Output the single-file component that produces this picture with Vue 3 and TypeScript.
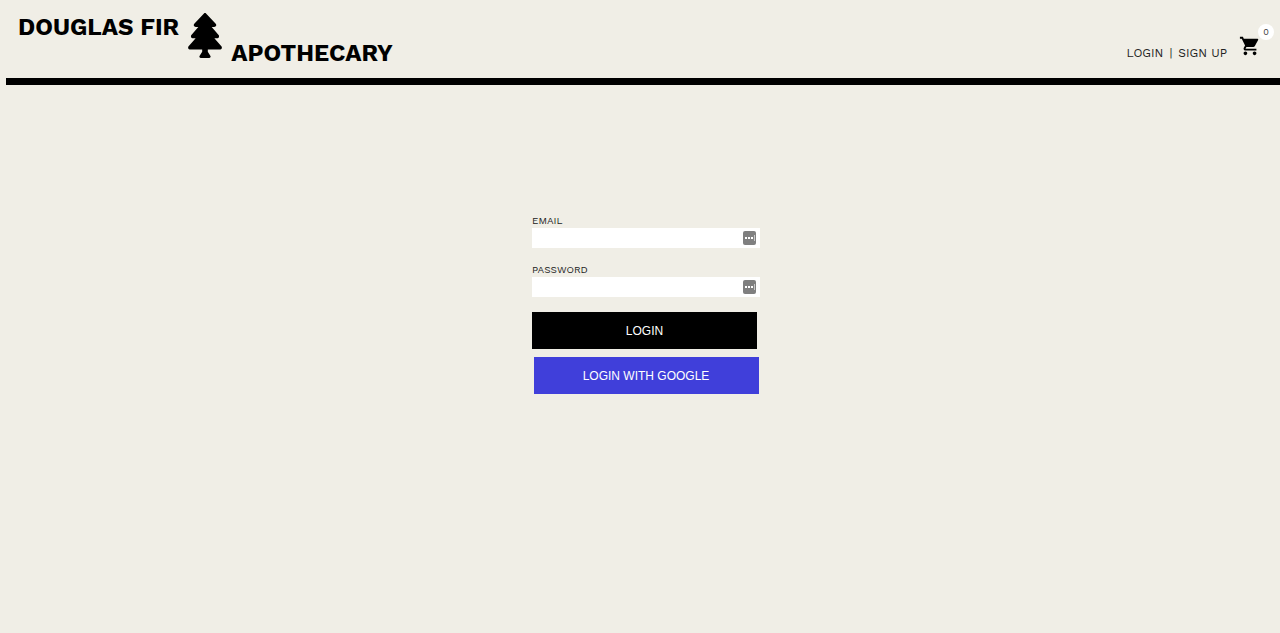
<script setup lang="ts">
import { ref } from 'vue'

const email = ref('')
const password = ref('')
const cartCount = ref(0)
</script>

<template>
  <div class="page">
    <header class="header">
      <a class="brand" href="#">
        <span class="brand-top">DOUGLAS FIR</span>
        <svg class="tree" viewBox="0 0 384 512" aria-hidden="true">
          <path d="M378.31 378.49L298.42 288h30.63c9.01 0 16.98-5 20.78-13.06 3.8-8.04 2.55-17.26-3.28-24.05L268.42 160h28.89c9.1 0 17.3-5.35 20.86-13.61 3.52-8.13 1.86-17.59-4.24-24.08L203.66 4.83c-6.03-6.45-17.28-6.45-23.32 0L70.06 122.31c-6.1 6.49-7.75 15.95-4.24 24.08C69.38 154.65 77.59 160 86.69 160h28.89l-78.14 90.91c-5.81 6.78-7.06 15.99-3.27 24.04C37.97 283 45.93 288 54.95 288h30.63L5.69 378.49c-6 6.79-7.36 16.09-3.56 24.26 3.75 8.05 12 13.25 21.01 13.25H160v24.45l-30.29 48.4c-5.32 10.64 2.42 23.16 14.31 23.16h95.96c11.89 0 19.63-12.52 14.31-23.16L224 440.45V416h136.86c9.01 0 17.26-5.2 21.01-13.25 3.8-8.17 2.44-17.47-3.56-24.26z" />
        </svg>
        <span class="brand-bottom">APOTHECARY</span>
      </a>
      <div class="tools">
        <nav class="nav">
          <a href="#">LOGIN</a>
          <span>|</span>
          <a href="#">SIGN UP</a>
        </nav>
        <a class="cart" href="#" aria-label="Cart">
          <svg class="cart-icon" viewBox="0 0 24 24" aria-hidden="true">
            <path d="M7 18c-1.1 0-1.99.9-1.99 2S5.9 22 7 22s2-.9 2-2-.9-2-2-2zM1 2v2h2l3.6 7.59-1.35 2.45c-.16.28-.25.61-.25.96 0 1.1.9 2 2 2h12v-2H7.42c-.14 0-.25-.11-.25-.25l.03-.12.9-1.63h7.45c.75 0 1.41-.41 1.75-1.03l3.58-6.49c.08-.14.12-.31.12-.48 0-.55-.45-1-1-1H5.21l-.94-2H1zm16 16c-1.1 0-1.99.9-1.99 2s.89 2 1.99 2 2-.9 2-2-.9-2-2-2z" />
          </svg>
          <span class="badge">{{ cartCount }}</span>
        </a>
      </div>
    </header>

    <main class="main">
      <form class="form" @submit.prevent>
        <label class="label" for="email">EMAIL</label>
        <div class="field">
          <input id="email" v-model="email" type="email" autocomplete="off" />
          <svg class="key" viewBox="0 0 13 14" aria-hidden="true">
            <rect width="13" height="14" rx="2" fill="#7f7f7f" />
            <path d="M2 6h2v2H2zM5 6h2v2H5zM8 6h2v2H8z" fill="#fff" />
            <path d="M11.5 4v6" stroke="#c8c8c8" />
          </svg>
        </div>
        <label class="label" for="password">PASSWORD</label>
        <div class="field">
          <input id="password" v-model="password" type="password" autocomplete="off" />
          <svg class="key" viewBox="0 0 13 14" aria-hidden="true">
            <rect width="13" height="14" rx="2" fill="#7f7f7f" />
            <path d="M2 6h2v2H2zM5 6h2v2H5zM8 6h2v2H8z" fill="#fff" />
            <path d="M11.5 4v6" stroke="#c8c8c8" />
          </svg>
        </div>
        <button class="button" type="submit">LOGIN</button>
        <button class="button google" type="button">LOGIN WITH GOOGLE</button>
      </form>
    </main>
  </div>
</template>

<style>
body {
  background: #f0eee6;
}
</style>

<style scoped>
.page {
  font-family: "Work Sans", Inter, sans-serif;
  color: #000;
}

.header {
  display: flex;
  justify-content: space-between;
  margin-left: 6px;
  padding: 13px 6px 11px 12px;
  border-bottom: 7px solid #000;
}

a {
  color: inherit;
  text-decoration: none;
}

.brand {
  display: flex;
  gap: 9px;
  height: 54px;
  font-size: 24px;
  font-weight: 700;
  line-height: 28px;
}

.brand-bottom {
  align-self: flex-end;
}

.tree {
  width: 34px;
  height: 45px;
}

.tools {
  display: flex;
  align-items: flex-end;
  gap: 12px;
}

.nav {
  display: flex;
  gap: 6px;
  padding-bottom: 6px;
  color: #222;
  font-size: 12px;
  line-height: 16px;
}

.cart {
  position: relative;
  width: 35px;
  height: 32px;
}

.cart-icon {
  display: block;
  width: 22px;
  height: 22px;
}

.badge {
  position: absolute;
  top: -11px;
  right: 0;
  width: 16px;
  border-radius: 50%;
  background: #fff;
  color: #333;
  font-size: 9px;
  line-height: 16px;
  text-align: center;
}

.main {
  display: flex;
  justify-content: center;
  padding: 129px 0 40px 12px;
}

.form {
  display: flex;
  flex-direction: column;
  align-items: flex-start;
  width: 228px;
}

.label {
  color: #222;
  font-size: 10px;
  line-height: 14px;
}

.field {
  display: flex;
  align-items: center;
  box-sizing: border-box;
  width: 100%;
  height: 20px;
  margin-bottom: 15px;
  padding-right: 4px;
  background: #fff;
}

input {
  flex: 1;
  min-width: 0;
  height: 100%;
  padding: 0 4px;
  border: 0;
  box-sizing: border-box;
  background: transparent;
  font-size: 12px;
  outline: none;
}

.key {
  width: 13px;
  height: 14px;
}

.button {
  width: 225px;
  height: 37px;
  padding: 0;
  border: 0;
  background: #000;
  color: #fff;
  font-family: "Liberation Sans", Arial, sans-serif;
  font-size: 12px;
}

.google {
  align-self: center;
  margin-top: 8px;
  background: #403fda;
}
</style>
